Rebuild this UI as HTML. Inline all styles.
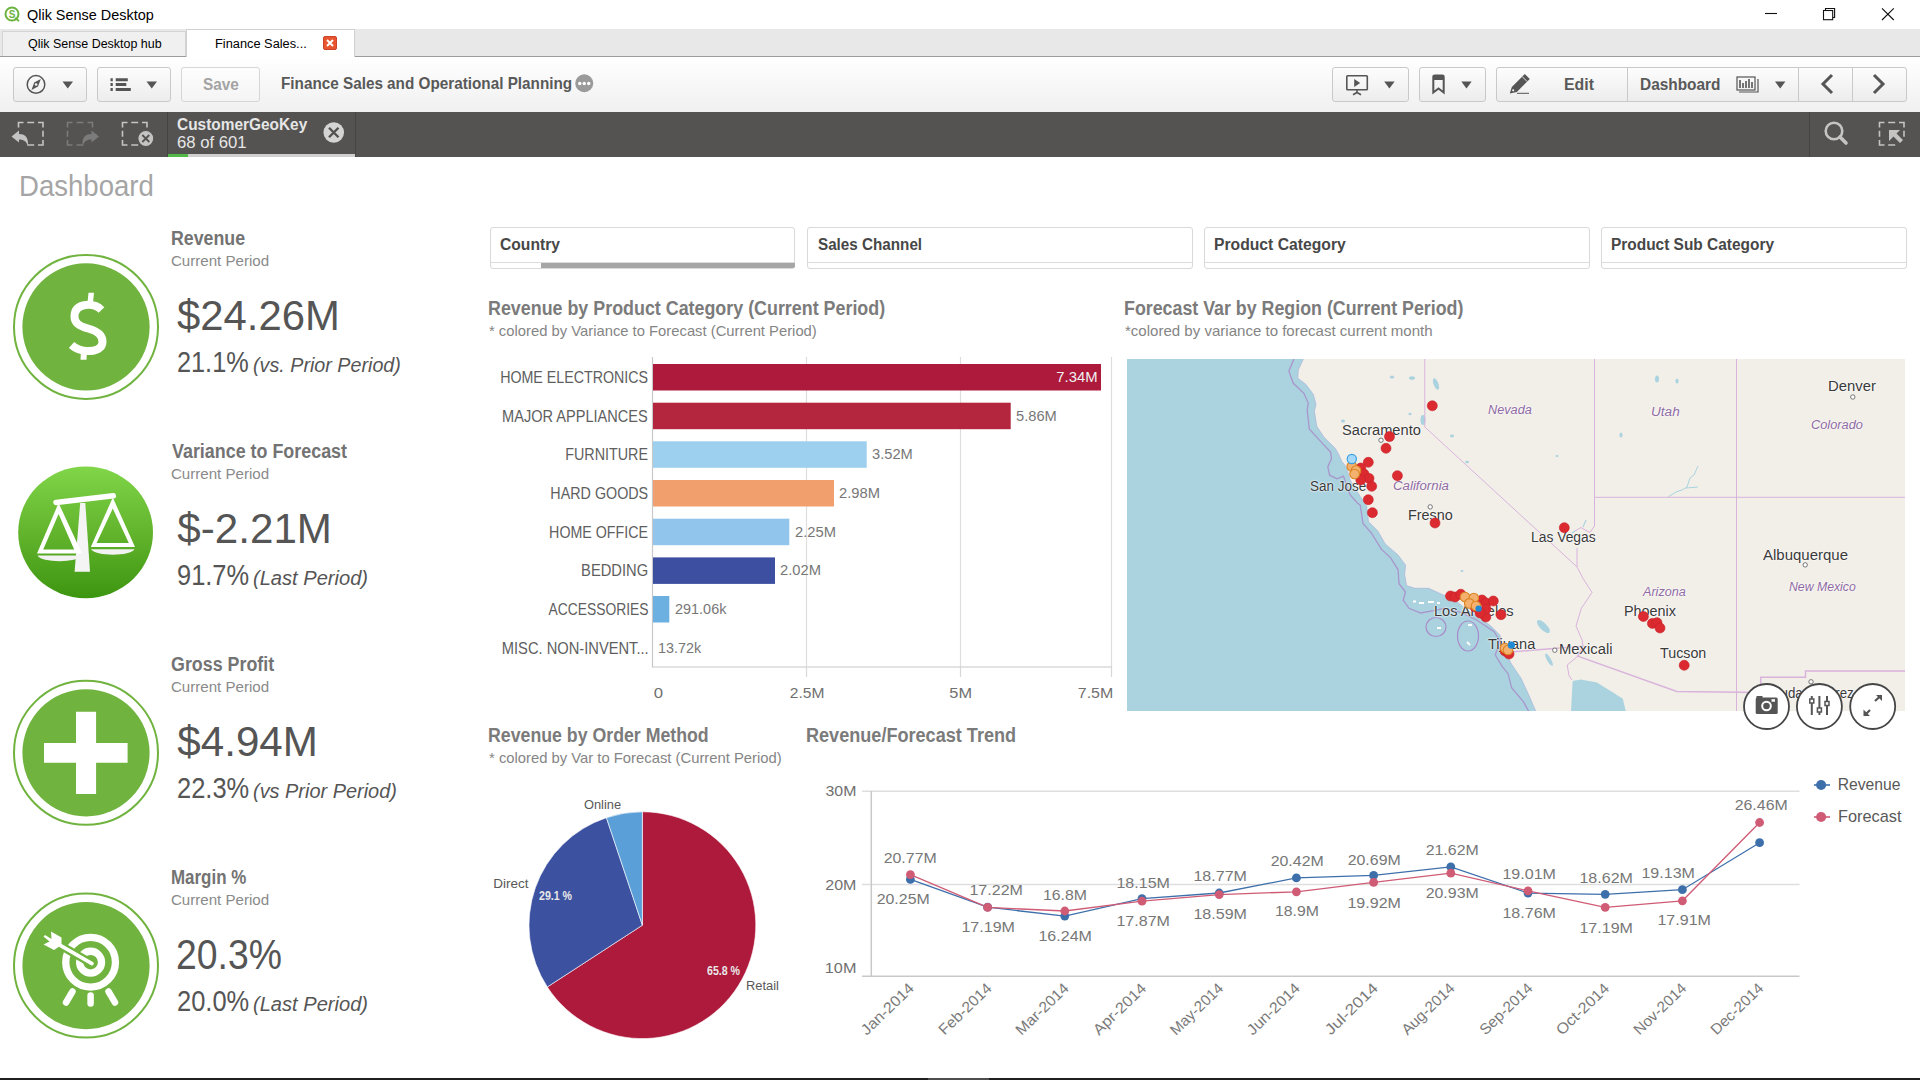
<!DOCTYPE html>
<html><head><meta charset="utf-8"><style>
html,body{margin:0;padding:0;width:1920px;height:1080px;overflow:hidden;background:#fff;}
body{position:relative;font-family:"Liberation Sans",sans-serif;}
.t{position:absolute;white-space:nowrap;}
svg{position:absolute;overflow:visible;}
</style></head><body>
<svg style="left:0;top:0" width="24" height="28"><circle cx="12" cy="14" r="6.5" fill="none" stroke="#6db33f" stroke-width="2"/><path d="M15 18 L19 21" stroke="#6db33f" stroke-width="2"/><text x="12" y="18" font-size="10" font-weight="bold" text-anchor="middle" fill="#6db33f" font-family="Liberation Sans">S</text></svg>
<div class="t" style="left:26.82px;top:6.96px;font-size:15.41px;line-height:15.41px;color:#000;transform:scaleX(0.937);transform-origin:left;">Qlik Sense Desktop</div>
<svg style="left:0;top:0" width="1920" height="30"><path d="M1765 13.5 H1777" stroke="#111" stroke-width="1.1"/><path d="M1825.5 10.3 V8.5 H1834.6 V17.5 H1832.7" fill="none" stroke="#111" stroke-width="1.1"/><rect x="1823.5" y="10.5" width="9.2" height="9.2" fill="#fff" stroke="#111" stroke-width="1.1"/><path d="M1882 8.3 L1893.8 20 M1893.8 8.3 L1882 20" stroke="#111" stroke-width="1.1"/></svg>
<div style="position:absolute;left:0.0px;top:29.0px;width:1920.0px;height:27.0px;background:#e8e8e8;"></div>
<div style="position:absolute;left:2.0px;top:31.0px;width:184.0px;height:25.0px;background:#f0f0f0;border:1px solid #d4d4d4;border-bottom:none;box-sizing:border-box;"></div>
<div style="position:absolute;left:186.0px;top:29.0px;width:169.0px;height:28.0px;background:#fff;border:1px solid #d0d0d0;border-bottom:none;box-sizing:border-box;"></div>
<div style="position:absolute;left:0.0px;top:56.0px;width:186.0px;height:1.0px;background:#9c9c9c;"></div>
<div style="position:absolute;left:355.0px;top:56.0px;width:1565.0px;height:1.0px;background:#9c9c9c;"></div>
<div class="t" style="left:27.91px;top:37.79px;font-size:12.65px;line-height:12.65px;color:#000;transform:scaleX(0.985);transform-origin:left;">Qlik Sense Desktop hub</div>
<div class="t" style="left:214.95px;top:36.80px;font-size:13.52px;line-height:13.52px;color:#000;transform:scaleX(0.947);transform-origin:left;">Finance Sales...</div>
<svg style="left:323px;top:36px" width="14" height="14"><rect x="0.5" y="0.5" width="13" height="13" rx="1.5" fill="#e8552f" stroke="#c9442a"/><path d="M4 4 L10 10 M10 4 L4 10" stroke="#fff" stroke-width="2"/></svg>
<div style="position:absolute;left:0.0px;top:57.0px;width:1920.0px;height:55.0px;background:linear-gradient(#ffffff,#f0f0f0);"></div>
<div style="position:absolute;left:13.0px;top:67.0px;width:74.0px;height:35.0px;background:linear-gradient(#fdfdfd,#ececec);border:1px solid #c9c9c9;border-radius:3px;box-sizing:border-box;"></div>
<div style="position:absolute;left:97.0px;top:67.0px;width:74.0px;height:35.0px;background:linear-gradient(#fdfdfd,#ececec);border:1px solid #c9c9c9;border-radius:3px;box-sizing:border-box;"></div>
<div style="position:absolute;left:181.0px;top:67.0px;width:79.0px;height:35.0px;background:linear-gradient(#fdfdfd,#f4f4f4);border:1px solid #d6d6d6;border-radius:3px;box-sizing:border-box;"></div>
<div style="position:absolute;left:1332.0px;top:67.0px;width:77.0px;height:35.0px;background:linear-gradient(#fdfdfd,#ececec);border:1px solid #c9c9c9;border-radius:3px;box-sizing:border-box;"></div>
<div style="position:absolute;left:1419.0px;top:67.0px;width:67.0px;height:35.0px;background:linear-gradient(#fdfdfd,#ececec);border:1px solid #c9c9c9;border-radius:3px;box-sizing:border-box;"></div>
<div style="position:absolute;left:1496.0px;top:67.0px;width:411.0px;height:35.0px;background:linear-gradient(#fdfdfd,#ececec);border:1px solid #c9c9c9;border-radius:3px;box-sizing:border-box;"></div>
<div style="position:absolute;left:1627.0px;top:68.0px;width:1.0px;height:33.0px;background:#c9c9c9;"></div>
<div style="position:absolute;left:1798.0px;top:68.0px;width:1.0px;height:33.0px;background:#c9c9c9;"></div>
<div style="position:absolute;left:1852.0px;top:68.0px;width:1.0px;height:33.0px;background:#c9c9c9;"></div>
<svg style="left:0;top:57px" width="1920" height="55"><circle cx="36" cy="27.4" r="8.8" fill="none" stroke="#555" stroke-width="1.5"/><path d="M40.8 22 L38 29.6 L31.5 33 L34.2 25.4 Z" fill="#555"/><circle cx="36.1" cy="27.5" r="1.3" fill="#f4f4f4"/><path d="M62.5 24.5 L73 24.5 L67.75 31.5 Z" fill="#555"/><path d="M110.5 22.8 h2.3 M115.7 22.8 h12.1 M110.5 27.6 h2.3 M115.7 27.6 h10.6 M110.5 32.4 h2.3 M115.7 32.4 h15.1" stroke="#555" stroke-width="3"/><path d="M146.5 24.5 L157 24.5 L151.75 31.5 Z" fill="#555"/><rect x="1346.8" y="18.8" width="20.5" height="14" rx="0.8" fill="none" stroke="#555" stroke-width="1.6"/><path d="M1354.2 22 L1360.2 26 L1354.2 30 Z" fill="#555"/><path d="M1357 33 V36 M1353 37.8 L1357 35.5 L1361 37.8" stroke="#555" stroke-width="1.6" fill="none"/><path d="M1384.2 24.5 L1394.6 24.5 L1389.4 31.5 Z" fill="#555"/><path d="M1433.3 20 Q1433.3 18.6 1435 18.6 H1442 Q1443.7 18.6 1443.7 20 V35.5 L1438.5 31.5 L1433.3 35.5 Z" fill="none" stroke="#555" stroke-width="2"/><rect x="1433" y="18.5" width="11" height="4.5" rx="1.5" fill="#555"/><path d="M1461.3 24.5 L1471.7 24.5 L1466.5 31.5 Z" fill="#555"/><path d="M1509.8 36.4 L1511.8 30 L1524.8 17 L1529.8 22 L1516.8 35 Z" fill="#555"/><path d="M1522.3 19.7 L1527.1 24.5" stroke="#f4f4f4" stroke-width="0.9"/><circle cx="1513.2" cy="33.3" r="1.1" fill="#f4f4f4"/><path d="M1517 36.3 H1529" stroke="#555" stroke-width="1"/><rect x="1737" y="20" width="18" height="13" fill="none" stroke="#555" stroke-width="1.2"/><path d="M1740 23 v8 M1743 26 v5 M1746 24 v7 M1749 22 v9 M1752 25 v6" stroke="#555" stroke-width="1.6"/><path d="M1758 22 V35 H1739" fill="none" stroke="#555" stroke-width="1.2"/><path d="M1775 24.5 L1785.4 24.5 L1780.2 31.5 Z" fill="#555"/><path d="M1832 18 L1823 27 L1832 36" fill="none" stroke="#555" stroke-width="3"/><path d="M1874 18 L1883 27 L1874 36" fill="none" stroke="#555" stroke-width="3"/></svg>
<div class="t" style="left:202.56px;top:76.49px;font-size:16.42px;line-height:16.42px;color:#a3a3a3;font-weight:bold;transform:scaleX(0.937);transform-origin:left;">Save</div>
<div class="t" style="left:280.73px;top:75.92px;font-size:16.86px;line-height:16.86px;color:#595959;font-weight:bold;transform:scaleX(0.906);transform-origin:left;">Finance Sales and Operational Planning</div>
<svg style="left:575px;top:74px" width="19" height="19"><circle cx="9.25" cy="9.25" r="9" fill="#9a9a9a"/><circle cx="4.8" cy="9.5" r="1.7" fill="#fff"/><circle cx="9.25" cy="9.5" r="1.7" fill="#fff"/><circle cx="13.7" cy="9.5" r="1.7" fill="#fff"/></svg>
<div class="t" style="left:1564.24px;top:75.88px;font-size:17.15px;line-height:17.15px;color:#595959;font-weight:bold;transform:scaleX(0.925);transform-origin:left;">Edit</div>
<div class="t" style="left:1639.97px;top:75.88px;font-size:17.15px;line-height:17.15px;color:#595959;font-weight:bold;transform:scaleX(0.899);transform-origin:left;">Dashboard</div>
<div style="position:absolute;left:0.0px;top:112.0px;width:1920.0px;height:45.0px;background:#545351;"></div>
<div style="position:absolute;left:167.0px;top:112.0px;width:1.0px;height:45.0px;background:#444;"></div>
<div style="position:absolute;left:355.0px;top:112.0px;width:1.0px;height:45.0px;background:#444;"></div>
<div style="position:absolute;left:1809.0px;top:112.0px;width:1.0px;height:45.0px;background:#444;"></div>
<div style="position:absolute;left:168.0px;top:154.0px;width:187.0px;height:3.0px;background:#cfcfcf;"></div>
<div style="position:absolute;left:168.0px;top:154.0px;width:20.0px;height:3.0px;background:#52b848;"></div>
<div class="t" style="left:177.37px;top:116.02px;font-size:16.28px;line-height:16.28px;color:#e6e6e6;font-weight:bold;transform:scaleX(0.948);transform-origin:left;">CustomerGeoKey</div>
<div class="t" style="left:177.15px;top:134.76px;font-size:15.99px;line-height:15.99px;color:#e6e6e6;transform:scaleX(1.045);transform-origin:left;">68 of 601</div>
<svg style="left:0;top:0" width="1920" height="160"><circle cx="333.75" cy="132.5" r="10.3" fill="#d4d4d4"/><path d="M329 127.75 L338.5 137.25 M338.5 127.75 L329 137.25" stroke="#535250" stroke-width="2.4"/><path d="M18.5 127.5 V122.5 H23.5 M38.0 122.5 H43.0 V127.5 M43.0 140.0 V145.0 H38.0 M27.2 122.5 H34.2 M27.2 145.0 H34.2 M43.0 130.8 V136.8" fill="none" stroke="#c4c4c4" stroke-width="1.6"/><path d="M11.5 136.5 L19 130.5 L19 134 C25 134 28.5 137 28 145.5 C26 141 23 139.5 19 139.5 L19 142.5 Z" fill="#c4c4c4"/><path d="M67.5 127.5 V122.5 H72.5 M87.5 122.5 H92.5 V127.5 M72.5 145.0 H67.5 V140.0 M76.5 122.5 H83.5 M76.5 145.0 H83.5 M67.5 130.8 V136.8" fill="none" stroke="#7b7b7b" stroke-width="1.6"/><path d="M99 136.5 L91.5 130.5 L91.5 134 C85.5 134 82 137 82.5 145.5 C84.5 141 87.5 139.5 91.5 139.5 L91.5 142.5 Z" fill="#7b7b7b"/><path d="M122.5 127.5 V122.5 H127.5 M142.0 122.5 H147.0 V127.5 M127.5 145.0 H122.5 V140.0 M131.2 122.5 H138.2 M131.2 145.0 H138.2 M122.5 130.8 V136.8" fill="none" stroke="#c4c4c4" stroke-width="1.6"/><circle cx="145.8" cy="138.5" r="8" fill="#c4c4c4" stroke="#535250" stroke-width="1.2"/><path d="M142.3 135 L149.3 142 M149.3 135 L142.3 142" stroke="#535250" stroke-width="1.8"/><circle cx="1834" cy="131" r="8.3" fill="none" stroke="#c4c4c4" stroke-width="2.6"/><path d="M1840 137 L1846 143" stroke="#c4c4c4" stroke-width="3.6" stroke-linecap="round"/><path d="M1879.5 127.5 V122.5 H1884.5 M1899.0 122.5 H1904.0 V127.5 M1884.5 145.0 H1879.5 V140.0 M1888.2 122.5 H1895.2 M1888.2 145.0 H1895.2 M1879.5 130.8 V136.8 M1904.0 130.8 V136.8" fill="none" stroke="#c4c4c4" stroke-width="1.6"/><path d="M1889 130 L1900 130 L1896.5 133.5 L1903 140 L1900 143 L1893.5 136.5 L1889 141 Z" fill="#c4c4c4"/></svg>
<div class="t" style="left:18.54px;top:171.66px;font-size:28.63px;line-height:28.63px;color:#a5a5a5;transform:scaleX(0.963);transform-origin:left;">Dashboard</div>
<div class="t" style="left:170.71px;top:228.71px;font-size:19.48px;line-height:19.48px;color:#737373;font-weight:bold;transform:scaleX(0.913);transform-origin:left;">Revenue</div>
<div class="t" style="left:170.93px;top:253.40px;font-size:15.12px;line-height:15.12px;color:#8a8a8a;">Current Period</div>
<div class="t" style="left:177.35px;top:295.11px;font-size:42.15px;line-height:42.15px;color:#555555;transform:scaleX(0.993);transform-origin:left;">$24.26M</div>
<div class="t" style="left:176.53px;top:348.19px;font-size:29.07px;line-height:29.07px;color:#555555;transform:scaleX(0.870);transform-origin:left;">21.1%</div>
<div class="t" style="left:252.58px;top:355.27px;font-size:20.35px;line-height:20.35px;color:#555555;font-style:italic;transform:scaleX(0.969);transform-origin:left;">(vs. Prior Period)</div>
<div class="t" style="left:171.78px;top:441.71px;font-size:19.48px;line-height:19.48px;color:#737373;font-weight:bold;transform:scaleX(0.919);transform-origin:left;">Variance to Forecast</div>
<div class="t" style="left:170.93px;top:466.40px;font-size:15.12px;line-height:15.12px;color:#8a8a8a;">Current Period</div>
<div class="t" style="left:177.35px;top:508.11px;font-size:42.15px;line-height:42.15px;color:#555555;">$-2.21M</div>
<div class="t" style="left:176.61px;top:561.19px;font-size:29.07px;line-height:29.07px;color:#555555;transform:scaleX(0.875);transform-origin:left;">91.7%</div>
<div class="t" style="left:252.56px;top:568.27px;font-size:20.35px;line-height:20.35px;color:#555555;font-style:italic;transform:scaleX(0.988);transform-origin:left;">(Last Period)</div>
<div class="t" style="left:171.17px;top:654.71px;font-size:19.48px;line-height:19.48px;color:#737373;font-weight:bold;transform:scaleX(0.917);transform-origin:left;">Gross Profit</div>
<div class="t" style="left:170.93px;top:679.40px;font-size:15.12px;line-height:15.12px;color:#8a8a8a;">Current Period</div>
<div class="t" style="left:177.35px;top:721.11px;font-size:42.15px;line-height:42.15px;color:#555555;">$4.94M</div>
<div class="t" style="left:176.52px;top:774.19px;font-size:29.07px;line-height:29.07px;color:#555555;transform:scaleX(0.876);transform-origin:left;">22.3%</div>
<div class="t" style="left:252.57px;top:781.27px;font-size:20.35px;line-height:20.35px;color:#555555;font-style:italic;transform:scaleX(0.979);transform-origin:left;">(vs Prior Period)</div>
<div class="t" style="left:170.77px;top:867.71px;font-size:19.48px;line-height:19.48px;color:#737373;font-weight:bold;transform:scaleX(0.870);transform-origin:left;">Margin %</div>
<div class="t" style="left:170.93px;top:892.40px;font-size:15.12px;line-height:15.12px;color:#8a8a8a;">Current Period</div>
<div class="t" style="left:175.92px;top:934.11px;font-size:42.15px;line-height:42.15px;color:#555555;transform:scaleX(0.887);transform-origin:left;">20.3%</div>
<div class="t" style="left:176.52px;top:987.19px;font-size:29.07px;line-height:29.07px;color:#555555;transform:scaleX(0.876);transform-origin:left;">20.0%</div>
<div class="t" style="left:252.56px;top:994.27px;font-size:20.35px;line-height:20.35px;color:#555555;font-style:italic;transform:scaleX(0.988);transform-origin:left;">(Last Period)</div>
<svg style="left:0;top:0" width="170" height="1080"><circle cx="86" cy="326.9" r="72" fill="none" stroke="#70b33f" stroke-width="2"/><circle cx="86" cy="326.9" r="63.6" fill="#70b33f"/><path d="M101.5 310 C97 305.5 91 304.5 86 305 C77 306 74.5 311 74.5 316.5 C74.5 323 79 326 88 328.5 C98 331.5 102.5 335 102.5 342 C102.5 348.5 96 351 88 351 C82 351 76 349 71.5 345" fill="none" stroke="#fff" stroke-width="8"/><path d="M88.5 292.8 H94 L93 302.5 H87.5 Z M81 349.5 H87 L86.5 359.7 H80.5 Z" fill="#fff"/><defs><linearGradient id="gsc" x1="0" y1="0" x2="0" y2="1"><stop offset="0" stop-color="#80d548"/><stop offset="0.55" stop-color="#5fb12a"/><stop offset="1" stop-color="#3d9610"/></linearGradient></defs><ellipse cx="85.6" cy="532.4" rx="67.4" ry="65.8" fill="url(#gsc)"/><path d="M56 502.4 L113.3 495.8" stroke="#fff" stroke-width="5.5" stroke-linecap="round"/><path d="M80.2 503 L85.3 503 L90 571.8 L74.6 571.8 Z" fill="#f4f4f4"/><path fill-rule="evenodd" fill="#fff" d="M58.6 503 L82 553.5 L37 553.5 Z M58.6 514 L74.2 549.5 L43.2 549.5 Z"/><path d="M37.5 555.5 H81.5 C78 563 41 563 37.5 555.5 Z" fill="#f2f2f2"/><path fill-rule="evenodd" fill="#fff" d="M112.8 497.5 L135 547 L90.8 547 Z M112.8 508.5 L128.8 543 L96.6 543 Z"/><path d="M91 549.3 H134.5 C131 556.5 95 556.5 91 549.3 Z" fill="#f2f2f2"/><circle cx="86" cy="752.8" r="72" fill="none" stroke="#70b33f" stroke-width="2"/><circle cx="86" cy="752.8" r="63.6" fill="#70b33f"/><path d="M76 711.8 H96.1 V743 H127.6 V762.8 H96.1 V794 H76 V762.8 H44 V743 H76 Z" fill="#fff"/><circle cx="86" cy="965.6" r="72" fill="none" stroke="#70b33f" stroke-width="2"/><circle cx="86" cy="965.6" r="63.6" fill="#70b33f"/><circle cx="90.6" cy="962.2" r="24.85" fill="none" stroke="#fff" stroke-width="7.3"/><circle cx="90.6" cy="962.2" r="10.95" fill="none" stroke="#fff" stroke-width="7.3"/><path d="M92 963.6 L60.7 945.6" stroke="#70b33f" stroke-width="8.5"/><path d="M92 963.6 L60.7 945.6" stroke="#fff" stroke-width="3.6" stroke-linecap="round"/><path d="M43.5 936.5 L45 935 L51.5 939 L51 931.5 L61.5 937.5 L61.5 945 L54 950 L43.5 944.5 L49.5 941.5 Z" fill="#fff"/><path d="M72.5 991.5 L66 1002.5 M90.6 995.5 V1003.5 M108.5 991.5 L115 1002.5" stroke="#fff" stroke-width="6.5" stroke-linecap="round"/></svg>
<div style="position:absolute;left:489.7px;top:226.5px;width:305.5px;height:42.0px;border:1px solid #d9d9d9;border-radius:3px;box-sizing:border-box;background:#fff;"></div>
<div style="position:absolute;left:490.7px;top:262.0px;width:303.5px;height:1.0px;background:#dcdcdc;"></div>
<div class="t" style="left:499.86px;top:235.89px;font-size:16.42px;line-height:16.42px;color:#474747;font-weight:bold;transform:scaleX(0.954);transform-origin:left;">Country</div>
<div style="position:absolute;left:807.3px;top:226.5px;width:385.6px;height:42.0px;border:1px solid #d9d9d9;border-radius:3px;box-sizing:border-box;background:#fff;"></div>
<div style="position:absolute;left:808.3px;top:262.0px;width:383.6px;height:1.0px;background:#dcdcdc;"></div>
<div class="t" style="left:817.66px;top:235.89px;font-size:16.42px;line-height:16.42px;color:#474747;font-weight:bold;transform:scaleX(0.928);transform-origin:left;">Sales Channel</div>
<div style="position:absolute;left:1204.2px;top:226.5px;width:385.4px;height:42.0px;border:1px solid #d9d9d9;border-radius:3px;box-sizing:border-box;background:#fff;"></div>
<div style="position:absolute;left:1205.2px;top:262.0px;width:383.4px;height:1.0px;background:#dcdcdc;"></div>
<div class="t" style="left:1213.95px;top:235.89px;font-size:16.42px;line-height:16.42px;color:#474747;font-weight:bold;transform:scaleX(0.957);transform-origin:left;">Product Category</div>
<div style="position:absolute;left:1601.2px;top:226.5px;width:306.2px;height:42.0px;border:1px solid #d9d9d9;border-radius:3px;box-sizing:border-box;background:#fff;"></div>
<div style="position:absolute;left:1602.2px;top:262.0px;width:304.2px;height:1.0px;background:#dcdcdc;"></div>
<div class="t" style="left:1611.02px;top:235.89px;font-size:16.42px;line-height:16.42px;color:#474747;font-weight:bold;transform:scaleX(0.941);transform-origin:left;">Product Sub Category</div>
<div style="position:absolute;left:541.0px;top:263.0px;width:254.0px;height:5.0px;background:#a6a6a6;border-radius:0 0 2px 0;"></div>
<div class="t" style="left:487.80px;top:299.36px;font-size:19.77px;line-height:19.77px;color:#7b7b7b;font-weight:bold;transform:scaleX(0.904);transform-origin:left;">Revenue by Product Category (Current Period)</div>
<div class="t" style="left:488.76px;top:323.99px;font-size:14.54px;line-height:14.54px;color:#858585;transform:scaleX(1.018);transform-origin:left;">* colored by Variance to Forecast (Current Period)</div>
<div class="t" style="left:1123.81px;top:299.36px;font-size:19.77px;line-height:19.77px;color:#7b7b7b;font-weight:bold;transform:scaleX(0.901);transform-origin:left;">Forecast Var by Region (Current Period)</div>
<div class="t" style="left:1124.76px;top:323.99px;font-size:14.54px;line-height:14.54px;color:#858585;transform:scaleX(1.035);transform-origin:left;">*colored by variance to forecast current month</div>
<div class="t" style="left:488.11px;top:726.16px;font-size:19.77px;line-height:19.77px;color:#7b7b7b;font-weight:bold;transform:scaleX(0.897);transform-origin:left;">Revenue by Order Method</div>
<div class="t" style="left:489.06px;top:750.99px;font-size:14.54px;line-height:14.54px;color:#858585;transform:scaleX(1.019);transform-origin:left;">* colored by Var to Forecast (Current Period)</div>
<div class="t" style="left:806.09px;top:726.16px;font-size:19.77px;line-height:19.77px;color:#7b7b7b;font-weight:bold;transform:scaleX(0.915);transform-origin:left;">Revenue/Forecast Trend</div>
<svg style="left:0;top:0" width="1920" height="1080"><path d="M806.5 357 V667" stroke="#dedede" stroke-width="1.2"/><path d="M960.5 357 V667" stroke="#dedede" stroke-width="1.2"/><path d="M1111.5 357 V667" stroke="#dedede" stroke-width="1.2"/><path d="M652.5 357 V667 H1112" fill="none" stroke="#c8c8c8" stroke-width="1.2"/><path d="M806.5 667 V677 M960.5 667 V677 M1111.5 667 V677" stroke="#d8d8d8" stroke-width="1.2"/><rect x="653" y="364.0" width="448.0" height="26.5" fill="#ad1a3c"/><rect x="653" y="402.7" width="357.7" height="26.5" fill="#b3263d"/><rect x="653" y="441.3" width="213.7" height="26.5" fill="#9dcfee"/><rect x="653" y="480.0" width="181.0" height="26.5" fill="#f19f6c"/><rect x="653" y="518.7" width="136.3" height="26.5" fill="#92c5eb"/><rect x="653" y="557.4" width="122.0" height="26.5" fill="#3c4fa0"/><rect x="653" y="596.0" width="16.3" height="26.5" fill="#6cb0e1"/><rect x="653" y="634.7" width="0.0" height="26.5" fill="#6cb0e1"/></svg>
<div class="t" style="left:479.15px;top:368.92px;font-size:16.28px;line-height:16.28px;color:#5e5e5e;transform:scaleX(0.875);transform-origin:right;">HOME ELECTRONICS</div>
<div class="t" style="left:1055.61px;top:370.02px;font-size:14.97px;line-height:14.97px;color:#f0f0f0;transform:scaleX(0.992);transform-origin:right;">7.34M</div>
<div class="t" style="left:485.48px;top:407.59px;font-size:16.28px;line-height:16.28px;color:#5e5e5e;transform:scaleX(0.895);transform-origin:right;">MAJOR APPLIANCES</div>
<div class="t" style="left:1016.11px;top:408.69px;font-size:14.97px;line-height:14.97px;color:#777777;transform:scaleX(0.980);transform-origin:left;">5.86M</div>
<div class="t" style="left:554.13px;top:446.26px;font-size:16.28px;line-height:16.28px;color:#5e5e5e;transform:scaleX(0.881);transform-origin:right;">FURNITURE</div>
<div class="t" style="left:872.14px;top:447.36px;font-size:14.97px;line-height:14.97px;color:#777777;transform:scaleX(0.980);transform-origin:left;">3.52M</div>
<div class="t" style="left:536.99px;top:484.93px;font-size:16.28px;line-height:16.28px;color:#5e5e5e;transform:scaleX(0.880);transform-origin:right;">HARD GOODS</div>
<div class="t" style="left:839.26px;top:486.03px;font-size:14.97px;line-height:14.97px;color:#777777;transform:scaleX(0.984);transform-origin:left;">2.98M</div>
<div class="t" style="left:535.16px;top:523.60px;font-size:16.28px;line-height:16.28px;color:#5e5e5e;transform:scaleX(0.875);transform-origin:right;">HOME OFFICE</div>
<div class="t" style="left:794.56px;top:524.70px;font-size:14.97px;line-height:14.97px;color:#777777;transform:scaleX(0.984);transform-origin:left;">2.25M</div>
<div class="t" style="left:574.49px;top:562.27px;font-size:16.28px;line-height:16.28px;color:#5e5e5e;transform:scaleX(0.904);transform-origin:right;">BEDDING</div>
<div class="t" style="left:780.26px;top:563.37px;font-size:14.97px;line-height:14.97px;color:#777777;transform:scaleX(0.984);transform-origin:left;">2.02M</div>
<div class="t" style="left:530.65px;top:600.94px;font-size:16.28px;line-height:16.28px;color:#5e5e5e;transform:scaleX(0.851);transform-origin:right;">ACCESSORIES</div>
<div class="t" style="left:674.57px;top:602.04px;font-size:14.97px;line-height:14.97px;color:#777777;transform:scaleX(0.965);transform-origin:left;">291.06k</div>
<div class="t" style="left:486.19px;top:639.61px;font-size:16.28px;line-height:16.28px;color:#5e5e5e;transform:scaleX(0.903);transform-origin:right;">MISC. NON-INVENT...</div>
<div class="t" style="left:657.91px;top:640.71px;font-size:14.97px;line-height:14.97px;color:#777777;transform:scaleX(0.958);transform-origin:left;">13.72k</div>
<div class="t" style="left:653.72px;top:685.26px;font-size:15.41px;line-height:15.41px;color:#707070;transform:scaleX(1.087);transform-origin:center;">0</div>
<div class="t" style="left:789.88px;top:685.26px;font-size:15.41px;line-height:15.41px;color:#707070;transform:scaleX(1.013);transform-origin:center;">2.5M</div>
<div class="t" style="left:949.60px;top:685.26px;font-size:15.41px;line-height:15.41px;color:#707070;transform:scaleX(1.061);transform-origin:center;">5M</div>
<div class="t" style="left:1079.37px;top:685.26px;font-size:15.41px;line-height:15.41px;color:#707070;transform:scaleX(1.035);transform-origin:right;">7.5M</div>
<svg style="left:0;top:0" width="1920" height="1080"><path d="M642.40 925.20 L642.40 811.80 A113.40 113.40 0 1 1 547.29 986.96 Z" fill="#ad1a3c" stroke="#fff" stroke-width="0.6"/><path d="M642.40 925.20 L547.29 986.96 A113.40 113.40 0 0 1 606.42 817.66 Z" fill="#3c52a1" stroke="#fff" stroke-width="0.6"/><path d="M642.40 925.20 L606.42 817.66 A113.40 113.40 0 0 1 642.40 811.80 Z" fill="#5a9fd8" stroke="#fff" stroke-width="0.6"/></svg>
<div class="t" style="left:583.17px;top:797.95px;font-size:13.52px;line-height:13.52px;color:#595959;transform:scaleX(0.952);transform-origin:center;">Online</div>
<div class="t" style="left:493.30px;top:877.05px;font-size:13.52px;line-height:13.52px;color:#595959;">Direct</div>
<div class="t" style="left:745.94px;top:979.45px;font-size:13.52px;line-height:13.52px;color:#595959;transform:scaleX(0.953);transform-origin:left;">Retail</div>
<div class="t" style="left:539.23px;top:890.39px;font-size:12.06px;line-height:12.06px;color:#e8e8e8;font-weight:bold;transform:scaleX(0.881);transform-origin:left;">29.1 %</div>
<div class="t" style="left:706.61px;top:964.69px;font-size:12.06px;line-height:12.06px;color:#e8e8e8;font-weight:bold;transform:scaleX(0.881);transform-origin:left;">65.8 %</div>
<svg style="left:0;top:0" width="1920" height="1080"><path d="M862 791.3 H1799.5 M862 884.4 H1799.5" stroke="#dedede" stroke-width="1.5"/><path d="M871.3 791 V976.3 H1799.5 M862 976.3 H871.3" fill="none" stroke="#c9c9c9" stroke-width="1.5"/><polyline points="910.4,879.4 987.6,907.2 1064.8,916.1 1142.0,898.6 1219.2,893.0 1296.4,877.9 1373.6,875.4 1450.8,866.9 1528.0,893.1 1605.2,894.3 1682.4,889.7 1759.6,842.7" fill="none" stroke="#3d6fab" stroke-width="1.3"/><polyline points="910.4,874.6 987.6,907.4 1064.8,911.0 1142.0,901.2 1219.2,894.6 1296.4,891.8 1373.6,882.4 1450.8,873.2 1528.0,890.8 1605.2,907.4 1682.4,900.8 1759.6,822.5" fill="none" stroke="#d05b75" stroke-width="1.3"/><circle cx="910.4" cy="879.4" r="4.4" fill="#3d6fab"/><circle cx="987.6" cy="907.2" r="4.4" fill="#3d6fab"/><circle cx="1064.8" cy="916.1" r="4.4" fill="#3d6fab"/><circle cx="1142.0" cy="898.6" r="4.4" fill="#3d6fab"/><circle cx="1219.2" cy="893.0" r="4.4" fill="#3d6fab"/><circle cx="1296.4" cy="877.9" r="4.4" fill="#3d6fab"/><circle cx="1373.6" cy="875.4" r="4.4" fill="#3d6fab"/><circle cx="1450.8" cy="866.9" r="4.4" fill="#3d6fab"/><circle cx="1528.0" cy="893.1" r="4.4" fill="#3d6fab"/><circle cx="1605.2" cy="894.3" r="4.4" fill="#3d6fab"/><circle cx="1682.4" cy="889.7" r="4.4" fill="#3d6fab"/><circle cx="1759.6" cy="842.7" r="4.4" fill="#3d6fab"/><circle cx="910.4" cy="874.6" r="4.4" fill="#d05b75"/><circle cx="987.6" cy="907.4" r="4.4" fill="#d05b75"/><circle cx="1064.8" cy="911.0" r="4.4" fill="#d05b75"/><circle cx="1142.0" cy="901.2" r="4.4" fill="#d05b75"/><circle cx="1219.2" cy="894.6" r="4.4" fill="#d05b75"/><circle cx="1296.4" cy="891.8" r="4.4" fill="#d05b75"/><circle cx="1373.6" cy="882.4" r="4.4" fill="#d05b75"/><circle cx="1450.8" cy="873.2" r="4.4" fill="#d05b75"/><circle cx="1528.0" cy="890.8" r="4.4" fill="#d05b75"/><circle cx="1605.2" cy="907.4" r="4.4" fill="#d05b75"/><circle cx="1682.4" cy="900.8" r="4.4" fill="#d05b75"/><circle cx="1759.6" cy="822.5" r="4.4" fill="#d05b75"/><path d="M1814 785 H1830" stroke="#3d6fab" stroke-width="1.6"/><circle cx="1821.1" cy="785" r="5" fill="#3d6fab"/><path d="M1814 817 H1830" stroke="#d05b75" stroke-width="1.6"/><circle cx="1821.1" cy="817" r="5" fill="#d05b75"/></svg>
<div class="t" style="left:1837.71px;top:777.21px;font-size:15.70px;line-height:15.70px;color:#595959;">Revenue</div>
<div class="t" style="left:1837.66px;top:809.21px;font-size:15.70px;line-height:15.70px;color:#595959;transform:scaleX(1.040);transform-origin:left;">Forecast</div>
<div class="t" style="left:827.10px;top:783.20px;font-size:15.12px;line-height:15.12px;color:#707070;transform:scaleX(1.051);transform-origin:right;">30M</div>
<div class="t" style="left:827.11px;top:876.50px;font-size:15.12px;line-height:15.12px;color:#707070;transform:scaleX(1.058);transform-origin:right;">20M</div>
<div class="t" style="left:827.12px;top:960.20px;font-size:15.12px;line-height:15.12px;color:#707070;transform:scaleX(1.073);transform-origin:right;">10M</div>
<div class="t" style="left:885.49px;top:849.80px;font-size:15.12px;line-height:15.12px;color:#777777;transform:scaleX(1.053);transform-origin:center;">20.77M</div>
<div class="t" style="left:877.79px;top:890.70px;font-size:15.12px;line-height:15.12px;color:#777777;transform:scaleX(1.053);transform-origin:center;">20.25M</div>
<div class="t" style="left:970.79px;top:882.40px;font-size:15.12px;line-height:15.12px;color:#777777;transform:scaleX(1.062);transform-origin:center;">17.22M</div>
<div class="t" style="left:962.79px;top:919.20px;font-size:15.12px;line-height:15.12px;color:#777777;transform:scaleX(1.062);transform-origin:center;">17.19M</div>
<div class="t" style="left:1043.99px;top:886.80px;font-size:15.12px;line-height:15.12px;color:#777777;transform:scaleX(1.047);transform-origin:center;">16.8M</div>
<div class="t" style="left:1039.79px;top:927.50px;font-size:15.12px;line-height:15.12px;color:#777777;transform:scaleX(1.062);transform-origin:center;">16.24M</div>
<div class="t" style="left:1117.79px;top:875.20px;font-size:15.12px;line-height:15.12px;color:#777777;transform:scaleX(1.062);transform-origin:center;">18.15M</div>
<div class="t" style="left:1117.79px;top:912.70px;font-size:15.12px;line-height:15.12px;color:#777777;transform:scaleX(1.062);transform-origin:center;">17.87M</div>
<div class="t" style="left:1194.79px;top:868.20px;font-size:15.12px;line-height:15.12px;color:#777777;transform:scaleX(1.062);transform-origin:center;">18.77M</div>
<div class="t" style="left:1194.79px;top:905.60px;font-size:15.12px;line-height:15.12px;color:#777777;transform:scaleX(1.062);transform-origin:center;">18.59M</div>
<div class="t" style="left:1271.79px;top:853.20px;font-size:15.12px;line-height:15.12px;color:#777777;transform:scaleX(1.053);transform-origin:center;">20.42M</div>
<div class="t" style="left:1275.99px;top:902.50px;font-size:15.12px;line-height:15.12px;color:#777777;transform:scaleX(1.047);transform-origin:center;">18.9M</div>
<div class="t" style="left:1348.79px;top:852.20px;font-size:15.12px;line-height:15.12px;color:#777777;transform:scaleX(1.053);transform-origin:center;">20.69M</div>
<div class="t" style="left:1348.79px;top:894.70px;font-size:15.12px;line-height:15.12px;color:#777777;transform:scaleX(1.062);transform-origin:center;">19.92M</div>
<div class="t" style="left:1427.09px;top:842.20px;font-size:15.12px;line-height:15.12px;color:#777777;transform:scaleX(1.053);transform-origin:center;">21.62M</div>
<div class="t" style="left:1427.09px;top:884.50px;font-size:15.12px;line-height:15.12px;color:#777777;transform:scaleX(1.053);transform-origin:center;">20.93M</div>
<div class="t" style="left:1504.09px;top:866.20px;font-size:15.12px;line-height:15.12px;color:#777777;transform:scaleX(1.062);transform-origin:center;">19.01M</div>
<div class="t" style="left:1504.09px;top:904.50px;font-size:15.12px;line-height:15.12px;color:#777777;transform:scaleX(1.062);transform-origin:center;">18.76M</div>
<div class="t" style="left:1581.49px;top:869.90px;font-size:15.12px;line-height:15.12px;color:#777777;transform:scaleX(1.062);transform-origin:center;">18.62M</div>
<div class="t" style="left:1581.49px;top:919.50px;font-size:15.12px;line-height:15.12px;color:#777777;transform:scaleX(1.062);transform-origin:center;">17.19M</div>
<div class="t" style="left:1643.09px;top:864.90px;font-size:15.12px;line-height:15.12px;color:#777777;transform:scaleX(1.062);transform-origin:center;">19.13M</div>
<div class="t" style="left:1658.79px;top:911.50px;font-size:15.12px;line-height:15.12px;color:#777777;transform:scaleX(1.062);transform-origin:center;">17.91M</div>
<div class="t" style="left:1736.49px;top:797.20px;font-size:15.12px;line-height:15.12px;color:#777777;transform:scaleX(1.053);transform-origin:center;">26.46M</div>
<div class="t" style="left:843.4px;top:980.0px;font-size:15.12px;line-height:15.12px;color:#7a7a7a;transform-origin:100% 0;transform:rotate(-44deg) scaleX(1.063);">Jan-2014</div>
<div class="t" style="left:918.9px;top:980.0px;font-size:15.12px;line-height:15.12px;color:#7a7a7a;transform-origin:100% 0;transform:rotate(-44deg) scaleX(1.035);">Feb-2014</div>
<div class="t" style="left:996.1px;top:980.0px;font-size:15.12px;line-height:15.12px;color:#7a7a7a;transform-origin:100% 0;transform:rotate(-44deg) scaleX(1.036);">Mar-2014</div>
<div class="t" style="left:1075.8px;top:980.0px;font-size:15.12px;line-height:15.12px;color:#7a7a7a;transform-origin:100% 0;transform:rotate(-44deg) scaleX(1.078);">Apr-2014</div>
<div class="t" style="left:1148.0px;top:980.0px;font-size:15.12px;line-height:15.12px;color:#7a7a7a;transform-origin:100% 0;transform:rotate(-44deg) scaleX(0.997);">May-2014</div>
<div class="t" style="left:1229.4px;top:980.0px;font-size:15.12px;line-height:15.12px;color:#7a7a7a;transform-origin:100% 0;transform:rotate(-44deg) scaleX(1.063);">Jun-2014</div>
<div class="t" style="left:1311.6px;top:980.0px;font-size:15.12px;line-height:15.12px;color:#7a7a7a;transform-origin:100% 0;transform:rotate(-44deg) scaleX(1.155);">Jul-2014</div>
<div class="t" style="left:1381.3px;top:980.0px;font-size:15.12px;line-height:15.12px;color:#7a7a7a;transform-origin:100% 0;transform:rotate(-44deg) scaleX(1.022);">Aug-2014</div>
<div class="t" style="left:1458.5px;top:980.0px;font-size:15.12px;line-height:15.12px;color:#7a7a7a;transform-origin:100% 0;transform:rotate(-44deg) scaleX(1.022);">Sep-2014</div>
<div class="t" style="left:1539.0px;top:980.0px;font-size:15.12px;line-height:15.12px;color:#7a7a7a;transform-origin:100% 0;transform:rotate(-44deg) scaleX(1.078);">Oct-2014</div>
<div class="t" style="left:1612.9px;top:980.0px;font-size:15.12px;line-height:15.12px;color:#7a7a7a;transform-origin:100% 0;transform:rotate(-44deg) scaleX(1.022);">Nov-2014</div>
<div class="t" style="left:1690.1px;top:980.0px;font-size:15.12px;line-height:15.12px;color:#7a7a7a;transform-origin:100% 0;transform:rotate(-44deg) scaleX(1.022);">Dec-2014</div>
<svg style="left:0;top:0" width="1920" height="1080"><defs><clipPath id="mc"><rect x="1127" y="359" width="778" height="352"/></clipPath></defs><g clip-path="url(#mc)"><rect x="1127" y="359" width="778" height="352" fill="#f2efe9"/><polygon points="1127,359 1303.3,359.0 1298.3,370.0 1297.8,378.3 1306.0,384.4 1313.3,394.4 1316.0,404.4 1314.4,411.0 1316.7,426.1 1324.0,437.2 1335.2,448.3 1338.9,454.8 1341.7,461.3 1346.3,466.9 1350.0,479.8 1355.6,489.1 1360.2,496.5 1366.7,505.7 1368.5,521.7 1377.8,530.9 1385.2,543.9 1398.1,555.0 1405.6,565.2 1404.6,574.4 1406.5,585.6 1414.8,588.3 1428.7,588.3 1441.7,594.3 1453.3,599.0 1465.0,608.3 1479.0,617.7 1490.6,625.8 1500.0,635.2 1502.3,646.8 1511.6,664.3 1521.0,678.3 1529.1,695.8 1536.1,712.0 1127,711" fill="#aad3df"/><polygon points="1571,712 1572.6,681 1580.7,679.4 1596.9,682.6 1613,692.4 1622.8,698.8 1626,712" fill="#aad3df"/><ellipse cx="1543.4" cy="626.6" rx="3.5" ry="8.5" transform="rotate(-45 1543.4 626.6)" fill="#aad3df"/><ellipse cx="1549" cy="659.7" rx="2" ry="7" transform="rotate(-30 1549 659.7)" fill="#aad3df"/><ellipse cx="1436" cy="384" rx="2.5" ry="6" transform="rotate(-20 1436 384)" fill="#aad3df"/><ellipse cx="1423" cy="420" rx="2.5" ry="5" fill="#aad3df"/><ellipse cx="1392" cy="377" rx="2.2" ry="1.5" fill="#aad3df"/><ellipse cx="1412" cy="378" rx="3" ry="1.8" fill="#aad3df"/><ellipse cx="1343" cy="421" rx="2" ry="1.5" fill="#aad3df"/><ellipse cx="1452" cy="436" rx="2" ry="1.4" fill="#aad3df"/><ellipse cx="1410" cy="414" rx="1.6" ry="1.2" fill="#aad3df"/><ellipse cx="1467" cy="462" rx="2" ry="1.3" fill="#aad3df"/><ellipse cx="1657" cy="379" rx="2" ry="3.5" fill="#aad3df"/><ellipse cx="1677" cy="381" rx="1.6" ry="2.5" fill="#aad3df"/><ellipse cx="1621" cy="435" rx="1.5" ry="2.5" fill="#aad3df"/><ellipse cx="1462" cy="571" rx="1.5" ry="1" fill="#aad3df"/><ellipse cx="1557" cy="456" rx="1.5" ry="1" fill="#aad3df"/><path d="M1698 466 L1694 475 L1690 478 L1687 487 L1682 490 L1676 492 L1668 497 M1686 488 L1698 487" fill="none" stroke="#aad3df" stroke-width="1"/><path d="M1586 520 L1583 527 M1575 531 L1572 533" fill="none" stroke="#aad3df" stroke-width="1.2"/><polyline points="1293.9,359.0 1288.9,371.1 1293.3,383.3 1303.9,393.3 1308.3,403.3 1307.2,410.0 1309.3,428.9 1318.5,439.1 1330.6,452.0 1331.5,458.5 1327.8,466.9 1329.6,475.2 1337.0,478.9 1343.5,476.1 1346.3,484.4 1350.0,494.6 1357.4,503.0 1360.2,505.0 1363.0,523.5 1371.3,532.8 1381.5,549.4 1390.7,557.8 1398.1,569.8 1399.0,583.7 1405.5,592.0 1403.2,600.2 1409.0,608.3 1420.7,613.0 1433.5,610.7 1444.0,608.3 1460.0,612.0 1476.7,620.0 1494.1,631.7 1500.0,641.0 1495.3,655.0 1502.3,666.7 1508.1,673.7 1511.6,687.6 1523.3,701.6 1529.1,712.0" fill="none" stroke="#a98bc9" stroke-width="1.3" opacity="0.85"/><polyline points="1303.3,359.0 1298.3,370.0 1297.8,378.3 1306.0,384.4 1313.3,394.4 1316.0,404.4 1314.4,411.0 1316.7,426.1 1324.0,437.2 1335.2,448.3 1338.9,454.8 1341.7,461.3 1346.3,466.9 1350.0,479.8 1355.6,489.1 1360.2,496.5 1366.7,505.7 1368.5,521.7 1377.8,530.9 1385.2,543.9 1398.1,555.0 1405.6,565.2 1404.6,574.4 1406.5,585.6 1414.8,588.3 1428.7,588.3 1441.7,594.3 1453.3,599.0 1465.0,608.3 1479.0,617.7 1490.6,625.8 1500.0,635.2 1502.3,646.8 1511.6,664.3 1521.0,678.3 1529.1,695.8 1536.1,712.0" fill="none" stroke="#a9b5dc" stroke-width="1" opacity="0.7"/><ellipse cx="1436" cy="627" rx="10" ry="9.5" fill="none" stroke="#a98bc9" stroke-width="1.2"/><ellipse cx="1468" cy="636" rx="10.5" ry="15" fill="none" stroke="#a98bc9" stroke-width="1.2"/><path d="M1413 601.5 h3 M1419 603 h5 M1428 602 h6 M1437 603 h3 M1437 628 h4 M1468 625 h4 M1467 642 l3 3" stroke="#fff" stroke-width="1.8"/><polyline points="1424.8,359 1424.8,427 1577,566.9" fill="none" stroke="#d9b3dc" stroke-width="1"/><polyline points="1594.5,359 1594.5,526 1590,532.5 1586,530.5 1581,527.5 1575,531" fill="none" stroke="#d9b3dc" stroke-width="1"/><polyline points="1577,548 1577,566.9 1583,578.4 1592,592.5 1581.3,608.4 1576,626 1582.2,640.2 1583,646.4 1577.8,656.2 1567.2,665 1569,675.6 1572,680" fill="none" stroke="#d9b3dc" stroke-width="1"/><polyline points="1594.5,497.3 1905,497.3" fill="none" stroke="#d9b3dc" stroke-width="1"/><polyline points="1736.5,359 1736.5,711" fill="none" stroke="#d9b3dc" stroke-width="1"/><polyline points="1512.6,651.8 1553,648.6 1583,646.4 1577.8,656.2 1676.8,691.5 1760.7,692.4 1760.7,700" fill="none" stroke="#d9b3dc" stroke-width="1.5"/><polyline points="1760.7,697 1760.7,677.2 1805.5,677.2 1805.5,671 1905,671" fill="none" stroke="#d9b3dc" stroke-width="1.5"/><circle cx="1381.0" cy="440.2" r="2.2" fill="#fff" stroke="#666" stroke-width="0.9"/><circle cx="1430.2" cy="506.9" r="2.2" fill="#fff" stroke="#666" stroke-width="0.9"/><circle cx="1554.8" cy="650.2" r="2.2" fill="#fff" stroke="#666" stroke-width="0.9"/><circle cx="1852.8" cy="397.0" r="2.2" fill="#fff" stroke="#666" stroke-width="0.9"/><circle cx="1805.2" cy="564.9" r="2.2" fill="#fff" stroke="#666" stroke-width="0.9"/><circle cx="1811.0" cy="681.8" r="2.2" fill="#fff" stroke="#666" stroke-width="0.9"/></g></svg>
<div class="t" style="left:1341.94px;top:423.79px;font-size:13.95px;line-height:13.95px;color:#3a3a3a;transform:scaleX(1.049);transform-origin:left;text-shadow:0 0 2px #fff,0 0 2px #fff;">Sacramento</div>
<div class="t" style="left:1310.19px;top:480.19px;font-size:13.95px;line-height:13.95px;color:#3a3a3a;transform:scaleX(0.966);transform-origin:left;text-shadow:0 0 2px #fff,0 0 2px #fff;">San Jose</div>
<div class="t" style="left:1407.82px;top:509.19px;font-size:13.95px;line-height:13.95px;color:#3a3a3a;transform:scaleX(1.031);transform-origin:left;text-shadow:0 0 2px #fff,0 0 2px #fff;">Fresno</div>
<div class="t" style="left:1433.80px;top:605.19px;font-size:13.95px;line-height:13.95px;color:#3a3a3a;transform:scaleX(1.048);transform-origin:left;text-shadow:0 0 2px #fff,0 0 2px #fff;">Los Angeles</div>
<div class="t" style="left:1487.67px;top:637.89px;font-size:13.95px;line-height:13.95px;color:#3a3a3a;transform:scaleX(1.046);transform-origin:left;text-shadow:0 0 2px #fff,0 0 2px #fff;">Tijuana</div>
<div class="t" style="left:1559.48px;top:643.19px;font-size:13.95px;line-height:13.95px;color:#3a3a3a;transform:scaleX(1.062);transform-origin:left;text-shadow:0 0 2px #fff,0 0 2px #fff;">Mexicali</div>
<div class="t" style="left:1530.66px;top:531.19px;font-size:13.95px;line-height:13.95px;color:#3a3a3a;transform:scaleX(0.994);transform-origin:left;text-shadow:0 0 2px #fff,0 0 2px #fff;">Las Vegas</div>
<div class="t" style="left:1624.12px;top:605.19px;font-size:13.95px;line-height:13.95px;color:#3a3a3a;transform:scaleX(1.031);transform-origin:left;text-shadow:0 0 2px #fff,0 0 2px #fff;">Phoenix</div>
<div class="t" style="left:1660.38px;top:646.99px;font-size:13.95px;line-height:13.95px;color:#3a3a3a;transform:scaleX(1.024);transform-origin:left;text-shadow:0 0 2px #fff,0 0 2px #fff;">Tucson</div>
<div class="t" style="left:1762.97px;top:548.69px;font-size:13.95px;line-height:13.95px;color:#3a3a3a;transform:scaleX(1.075);transform-origin:left;text-shadow:0 0 2px #fff,0 0 2px #fff;">Albuquerque</div>
<div class="t" style="left:1828.48px;top:380.49px;font-size:13.95px;line-height:13.95px;color:#3a3a3a;transform:scaleX(1.068);transform-origin:left;text-shadow:0 0 2px #fff,0 0 2px #fff;">Denver</div>
<div class="t" style="left:1487.61px;top:403.32px;font-size:13.08px;line-height:13.08px;color:#8f6aa3;font-style:italic;transform:scaleX(0.972);transform-origin:left;text-shadow:0 0 2px #fff,0 0 2px #fff;">Nevada</div>
<div class="t" style="left:1393.27px;top:479.32px;font-size:13.08px;line-height:13.08px;color:#8f6aa3;font-style:italic;transform:scaleX(1.013);transform-origin:left;text-shadow:0 0 2px #fff,0 0 2px #fff;">California</div>
<div class="t" style="left:1650.68px;top:404.62px;font-size:13.08px;line-height:13.08px;color:#8f6aa3;font-style:italic;transform:scaleX(1.040);transform-origin:left;text-shadow:0 0 2px #fff,0 0 2px #fff;">Utah</div>
<div class="t" style="left:1810.59px;top:417.62px;font-size:13.08px;line-height:13.08px;color:#8f6aa3;font-style:italic;transform:scaleX(0.979);transform-origin:left;text-shadow:0 0 2px #fff,0 0 2px #fff;">Colorado</div>
<div class="t" style="left:1642.62px;top:584.52px;font-size:13.08px;line-height:13.08px;color:#8f6aa3;font-style:italic;transform:scaleX(0.965);transform-origin:left;text-shadow:0 0 2px #fff,0 0 2px #fff;">Arizona</div>
<div class="t" style="left:1789.22px;top:580.12px;font-size:13.08px;line-height:13.08px;color:#8f6aa3;font-style:italic;transform:scaleX(0.938);transform-origin:left;text-shadow:0 0 2px #fff,0 0 2px #fff;">New Mexico</div>
<div class="t" style="left:1768.32px;top:687.19px;font-size:13.95px;line-height:13.95px;color:#3a3a3a;transform:scaleX(0.954);transform-origin:left;text-shadow:0 0 2px #fff,0 0 2px #fff;">Ciudad Juárez</div>
<svg style="left:0;top:0" width="1920" height="1080"><circle cx="1432.3" cy="405.8" r="5" fill="#dc2a31" stroke="#c62228" stroke-width="0.6"/><circle cx="1389.5" cy="436.6" r="5" fill="#dc2a31" stroke="#c62228" stroke-width="0.6"/><circle cx="1386.0" cy="448.3" r="5" fill="#dc2a31" stroke="#c62228" stroke-width="0.6"/><circle cx="1368.3" cy="462.3" r="5" fill="#dc2a31" stroke="#c62228" stroke-width="0.6"/><circle cx="1397.4" cy="475.7" r="5" fill="#dc2a31" stroke="#c62228" stroke-width="0.6"/><circle cx="1360.8" cy="468.0" r="5" fill="#dc2a31" stroke="#c62228" stroke-width="0.6"/><circle cx="1364.0" cy="474.0" r="5" fill="#dc2a31" stroke="#c62228" stroke-width="0.6"/><circle cx="1369.0" cy="478.4" r="5" fill="#dc2a31" stroke="#c62228" stroke-width="0.6"/><circle cx="1371.7" cy="486.3" r="5" fill="#dc2a31" stroke="#c62228" stroke-width="0.6"/><circle cx="1360.8" cy="480.0" r="5" fill="#dc2a31" stroke="#c62228" stroke-width="0.6"/><circle cx="1368.3" cy="499.7" r="5" fill="#dc2a31" stroke="#c62228" stroke-width="0.6"/><circle cx="1372.4" cy="512.7" r="5" fill="#dc2a31" stroke="#c62228" stroke-width="0.6"/><circle cx="1435.0" cy="523.0" r="5" fill="#dc2a31" stroke="#c62228" stroke-width="0.6"/><circle cx="1564.3" cy="527.7" r="5" fill="#dc2a31" stroke="#c62228" stroke-width="0.6"/><circle cx="1643.4" cy="616.5" r="5" fill="#dc2a31" stroke="#c62228" stroke-width="0.6"/><circle cx="1652.4" cy="623.4" r="5" fill="#dc2a31" stroke="#c62228" stroke-width="0.6"/><circle cx="1657.0" cy="622.7" r="5" fill="#dc2a31" stroke="#c62228" stroke-width="0.6"/><circle cx="1660.0" cy="628.0" r="5" fill="#dc2a31" stroke="#c62228" stroke-width="0.6"/><circle cx="1684.2" cy="665.3" r="5" fill="#dc2a31" stroke="#c62228" stroke-width="0.6"/><circle cx="1450.5" cy="596.0" r="5" fill="#dc2a31" stroke="#c62228" stroke-width="0.6"/><circle cx="1455.0" cy="597.0" r="5" fill="#dc2a31" stroke="#c62228" stroke-width="0.6"/><circle cx="1460.8" cy="594.2" r="5" fill="#dc2a31" stroke="#c62228" stroke-width="0.6"/><circle cx="1482.0" cy="600.0" r="5" fill="#dc2a31" stroke="#c62228" stroke-width="0.6"/><circle cx="1486.0" cy="603.0" r="5" fill="#dc2a31" stroke="#c62228" stroke-width="0.6"/><circle cx="1493.3" cy="601.0" r="5" fill="#dc2a31" stroke="#c62228" stroke-width="0.6"/><circle cx="1501.0" cy="614.7" r="5" fill="#dc2a31" stroke="#c62228" stroke-width="0.6"/><circle cx="1485.8" cy="617.0" r="5" fill="#dc2a31" stroke="#c62228" stroke-width="0.6"/><circle cx="1486.0" cy="609.0" r="5" fill="#dc2a31" stroke="#c62228" stroke-width="0.6"/><circle cx="1475.0" cy="607.0" r="5" fill="#dc2a31" stroke="#c62228" stroke-width="0.6"/><circle cx="1480.0" cy="613.0" r="5" fill="#dc2a31" stroke="#c62228" stroke-width="0.6"/><circle cx="1505.0" cy="651.0" r="5" fill="#dc2a31" stroke="#c62228" stroke-width="0.6"/><circle cx="1509.0" cy="654.0" r="5" fill="#dc2a31" stroke="#c62228" stroke-width="0.6"/><circle cx="1351.8" cy="466.4" r="4.8" fill="#f4b06e" stroke="#d98420" stroke-width="1.1"/><circle cx="1356.0" cy="470.5" r="4.8" fill="#f4b06e" stroke="#d98420" stroke-width="1.1"/><circle cx="1354.6" cy="474.0" r="4.8" fill="#f4b06e" stroke="#d98420" stroke-width="1.1"/><circle cx="1465.0" cy="597.0" r="4.8" fill="#f4b06e" stroke="#d98420" stroke-width="1.1"/><circle cx="1473.8" cy="598.0" r="4.8" fill="#f4b06e" stroke="#d98420" stroke-width="1.1"/><circle cx="1469.3" cy="603.4" r="4.8" fill="#f4b06e" stroke="#d98420" stroke-width="1.1"/><circle cx="1476.0" cy="606.0" r="4.8" fill="#f4b06e" stroke="#d98420" stroke-width="1.1"/><circle cx="1505.0" cy="648.0" r="4.8" fill="#f4b06e" stroke="#d98420" stroke-width="1.1"/><circle cx="1508.0" cy="650.0" r="4.8" fill="#f4b06e" stroke="#d98420" stroke-width="1.1"/><circle cx="1351.8" cy="459" r="4.6" fill="#a5d9f7" stroke="#3a9fe0" stroke-width="1.2"/><circle cx="1478.6" cy="608.6" r="3.2" fill="#1f8ad6"/><circle cx="1511.4" cy="645.2" r="3.6" fill="#1f8ad6"/></svg>
<svg style="left:0;top:0" width="1920" height="1080"><circle cx="1766.5" cy="706.5" r="22.5" fill="#fff" stroke="#464646" stroke-width="1.8"/><circle cx="1819.4" cy="706.5" r="22.5" fill="#fff" stroke="#464646" stroke-width="1.8"/><circle cx="1872.7" cy="706.5" r="22.5" fill="#fff" stroke="#464646" stroke-width="1.8"/><rect x="1755.7" y="697.6" width="22" height="16.5" rx="1.5" fill="#555"/><rect x="1756.5" y="696" width="6" height="3" fill="#555"/><circle cx="1766.5" cy="706" r="5.3" fill="#fff"/><circle cx="1766.5" cy="706" r="3.3" fill="#555"/><rect x="1771.5" y="699.2" width="3.5" height="2.5" fill="#fff"/><path d="M1811.8 696 V715 M1819.4 696 V715 M1827 696 V715" stroke="#555" stroke-width="2"/><rect x="1809.8" y="699" width="4" height="4" fill="#fff" stroke="#555" stroke-width="1.5"/><rect x="1817.4" y="708" width="4" height="4" fill="#fff" stroke="#555" stroke-width="1.5"/><rect x="1825" y="701.5" width="4" height="4" fill="#fff" stroke="#555" stroke-width="1.5"/><path d="M1879 697 L1881.5 697 L1881.5 699.5 Z M1864 715 L1864 712 L1867 715 Z" fill="#555"/><path d="M1875 701 L1881 695.5 M1870 710 L1864.5 715.5" stroke="#555" stroke-width="2.2"/><path d="M1876 695 H1882 V701 Z M1863.5 709.5 V716 H1870 Z" fill="#555"/></svg>
<div style="position:absolute;left:0.0px;top:1078.0px;width:1920.0px;height:2.0px;background:#1f1f1f;"></div>
<div style="position:absolute;left:928.0px;top:1078.0px;width:61.0px;height:2.0px;background:#4d4d4d;"></div>
</body></html>
